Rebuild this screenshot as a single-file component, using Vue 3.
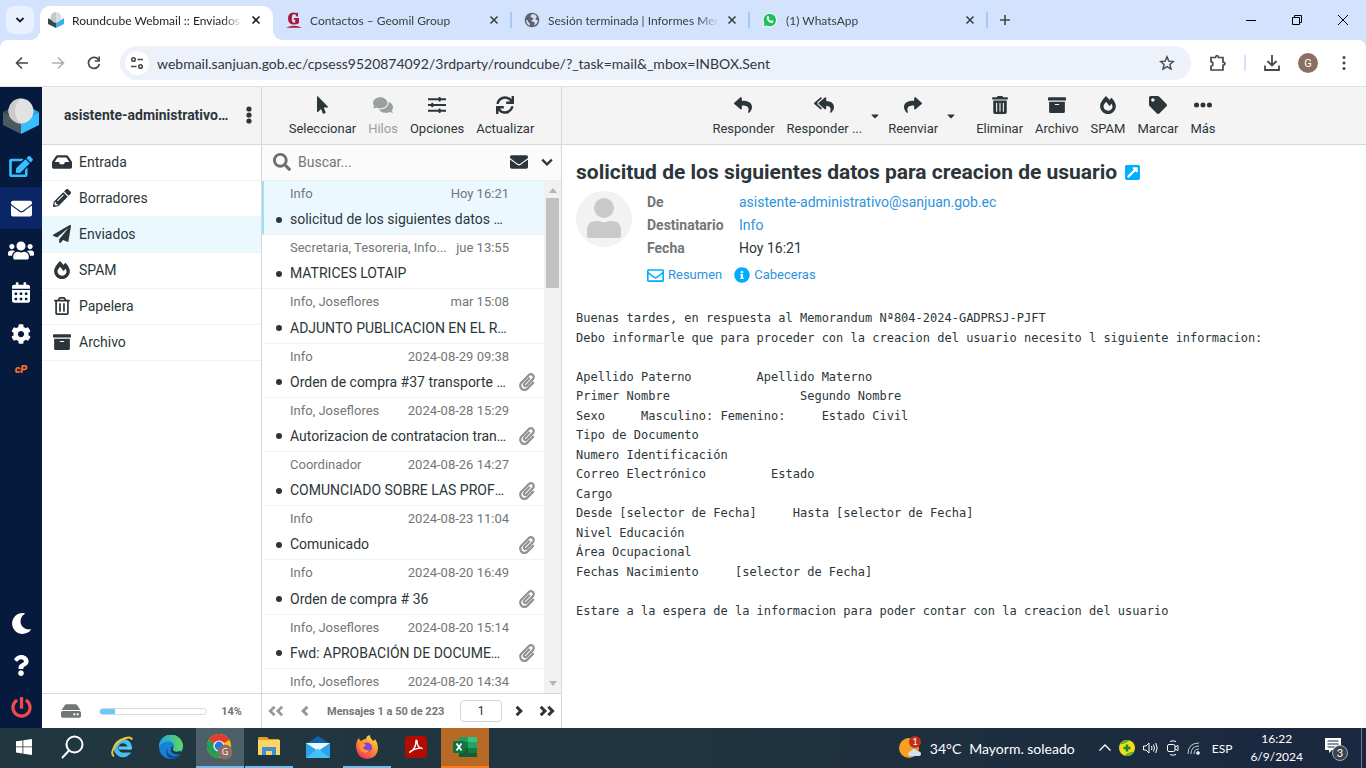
<script setup>
import { h, ref } from 'vue'

const paths = {
  envelope: [512, 'M502.3 190.8c3.9-3.1 9.7-.2 9.7 4.7V400c0 26.5-21.5 48-48 48H48c-26.5 0-48-21.5-48-48V195.6c0-5 5.7-7.8 9.7-4.7 22.4 17.4 52.1 39.5 154.1 113.6 21.1 15.4 56.7 47.8 92.2 47.6 35.7.3 72-32.8 92.3-47.6 102-74.1 131.6-96.3 154-113.7zM256 320c23.2.4 56.6-29.2 73.4-41.4 132.7-96.3 142.8-104.7 173.4-128.7 5.8-4.5 9.2-11.5 9.2-18.9v-19c0-26.5-21.5-48-48-48H48c-26.5 0-48 21.5-48 48v19c0 7.4 3.4 14.3 9.2 18.9 30.6 23.9 40.7 32.4 173.4 128.7 16.8 12.2 50.2 41.8 73.4 41.4z'],
  envelopeOpen: [512, 'M464 64H48C21.5 64 0 85.5 0 112v288c0 26.5 21.5 48 48 48h416c26.5 0 48-21.5 48-48V112c0-26.5-21.5-48-48-48zm0 48v40.8c-22.4 18.3-58.2 46.7-134.6 106.5-16.8 13.2-50.2 45.1-73.4 44.7-23.2.4-56.6-31.5-73.4-44.7C106.2 199.5 70.4 171.1 48 152.8V112h416zM48 400V214.4c22.9 18.2 55.4 43.9 105 82.8 21.9 17.2 60.3 55.2 103 54.8 42.5.3 80.4-37.1 103-54.8 49.6-38.8 82.1-64.5 105-82.800V400H48z'],
  users: [640, 'M96 224c35.3 0 64-28.7 64-64s-28.7-64-64-64-64 28.7-64 64 28.7 64 64 64zm448 0c35.3 0 64-28.7 64-64s-28.7-64-64-64-64 28.7-64 64 28.7 64 64 64zm32 32h-64c-17.6 0-33.5 7.1-45.1 18.6 40.3 22.1 68.9 62 75.1 109.4h66c17.7 0 32-14.3 32-32v-32c0-35.3-28.7-64-64-64zm-256 0c61.9 0 112-50.1 112-112S381.9 32 320 32 208 82.1 208 144s50.1 112 112 112zm76.8 32h-8.3c-20.8 10-43.9 16-68.5 16s-47.6-6-68.5-16h-8.3C179.6 288 128 339.6 128 403.2V432c0 26.5 21.5 48 48 48h288c26.5 0 48-21.5 48-48v-28.8c0-63.6-51.6-115.2-115.2-115.2zm-223.7-13.4C161.5 263.1 145.6 256 128 256H64c-35.3 0-64 28.7-64 64v32c0 17.7 14.3 32 32 32h65.9c6.3-47.4 34.9-87.3 75.2-109.4z'],
  calendar: [448, 'M0 464c0 26.5 21.5 48 48 48h352c26.5 0 48-21.5 48-48V192H0v272zm320-196c0-6.6 5.4-12 12-12h40c6.6 0 12 5.4 12 12v40c0 6.6-5.4 12-12 12h-40c-6.6 0-12-5.4-12-12v-40zm0 128c0-6.6 5.4-12 12-12h40c6.6 0 12 5.4 12 12v40c0 6.6-5.4 12-12 12h-40c-6.6 0-12-5.4-12-12v-40zM192 268c0-6.6 5.4-12 12-12h40c6.6 0 12 5.4 12 12v40c0 6.6-5.4 12-12 12h-40c-6.6 0-12-5.4-12-12v-40zm0 128c0-6.6 5.4-12 12-12h40c6.6 0 12 5.4 12 12v40c0 6.6-5.4 12-12 12h-40c-6.6 0-12-5.4-12-12v-40zM64 268c0-6.6 5.4-12 12-12h40c6.6 0 12 5.4 12 12v40c0 6.6-5.4 12-12 12H76c-6.6 0-12-5.4-12-12v-40zm0 128c0-6.6 5.4-12 12-12h40c6.6 0 12 5.4 12 12v40c0 6.6-5.4 12-12 12H76c-6.6 0-12-5.4-12-12v-40zM400 64h-48V16c0-8.8-7.2-16-16-16h-32c-8.8 0-16 7.2-16 16v48H160V16c0-8.8-7.2-16-16-16h-32c-8.8 0-16 7.2-16 16v48H48C21.5 64 0 85.5 0 112v48h448v-48c0-26.5-21.5-48-48-48z'],
  cog: [512, 'M487.4 315.7l-42.6-24.6c4.3-23.2 4.3-47 0-70.2l42.6-24.6c4.9-2.8 7.1-8.6 5.5-14-11.1-35.6-30-67.8-54.7-94.6-3.8-4.1-10-5.1-14.8-2.3L380.8 110c-17.9-15.4-38.5-27.3-60.8-35.1V25.8c0-5.6-3.9-10.5-9.4-11.7-36.7-8.2-74.3-7.8-109.2 0-5.5 1.2-9.4 6.1-9.4 11.7V75c-22.2 7.9-42.8 19.8-60.8 35.1L88.7 85.5c-4.9-2.8-11-1.9-14.8 2.3-24.7 26.7-43.6 58.9-54.7 94.6-1.7 5.4.6 11.2 5.5 14L67.3 221c-4.3 23.2-4.3 47 0 70.2l-42.6 24.6c-4.9 2.8-7.1 8.6-5.5 14 11.1 35.6 30 67.8 54.7 94.6 3.8 4.1 10 5.1 14.8 2.3l42.6-24.6c17.9 15.4 38.5 27.3 60.8 35.1v49.2c0 5.6 3.9 10.5 9.4 11.7 36.7 8.2 74.3 7.8 109.2 0 5.5-1.2 9.4-6.1 9.4-11.7v-49.2c22.2-7.9 42.8-19.8 60.8-35.1l42.6 24.6c4.9 2.8 11 1.9 14.8-2.3 24.7-26.7 43.6-58.9 54.7-94.6 1.5-5.5-.7-11.3-5.6-14.1zM256 336c-44.1 0-80-35.9-80-80s35.9-80 80-80 80 35.9 80 80-35.9 80-80 80z'],
  moon: [512, 'M283.211 512c78.962 0 151.079-35.925 198.857-94.792 7.068-8.708-.639-21.43-11.562-19.35-124.203 23.654-238.262-71.576-238.262-196.954 0-72.222 38.662-138.635 101.498-174.394 9.686-5.512 7.25-20.197-3.756-22.23A258.156 258.156 0 0 0 283.211 0c-141.309 0-256 114.511-256 256 0 141.309 114.511 256 256 256z'],
  question: [384, 'M202.021 0C122.202 0 70.503 32.703 29.914 91.026c-7.363 10.58-5.093 25.086 5.178 32.874l43.138 32.709c10.373 7.865 25.132 6.026 33.253-4.148 25.049-31.381 43.63-49.449 82.757-49.449 30.764 0 68.816 19.799 68.816 49.631 0 22.552-18.617 34.134-48.993 51.164-35.423 19.86-82.299 44.576-82.299 106.405V320c0 13.255 10.745 24 24 24h72.471c13.255 0 24-10.745 24-24v-5.773c0-42.86 125.268-44.645 125.268-160.627C377.504 66.256 286.902 0 202.021 0zM192 373.459c-38.196 0-69.271 31.075-69.271 69.271 0 38.195 31.075 69.27 69.271 69.27s69.271-31.075 69.271-69.271-31.075-69.27-69.271-69.27z'],
  power: [512, 'M400 54.1c63 45 104 118.6 104 201.9 0 136.8-110.8 247.7-247.5 248C120 504.3 8.2 393 8 256.4 7.9 173.1 48.9 99.3 111.8 54.2c11.7-8.3 28-4.8 35 7.7L162.6 90c5.9 10.5 3.1 23.8-6.6 31-41.5 30.8-68 79.6-68 134.9-.1 92.3 74.5 168.1 168 168.1 91.6 0 168.6-74.2 168-169.1-.3-51.8-24.7-101.8-68.1-134-9.7-7.2-12.4-20.5-6.5-30.9l15.8-28.1c7-12.4 23.2-16.1 34.8-7.8zM296 264V24c0-13.3-10.7-24-24-24h-32c-13.3 0-24 10.7-24 24v240c0 13.3 10.7 24 24 24h32c13.3 0 24-10.7 24-24z'],
  plane: [512, 'M476 3.2L12.5 270.6c-18.1 10.4-15.8 35.6 2.2 43.2L121 358.4l287.3-253.2c5.5-4.9 13.3 2.6 8.6 8.3L176 407v80.5c0 23.6 28.5 32.9 42.5 15.8L282 426l124.6 52.2c14.2 6 30.4-2.9 33-18.2l72-432C515 7.8 493.3-6.8 476 3.2z'],
  inbox: [576, 'M567.938 243.908L462.25 85.374A48.003 48.003 0 0 0 422.311 64H153.689a48 48 0 0 0-39.938 21.374L8.062 243.908A47.994 47.994 0 0 0 0 270.533V400c0 26.51 21.49 48 48 48h480c26.51 0 48-21.49 48-48V270.533a47.994 47.994 0 0 0-8.062-26.625zM162.252 128h251.497l85.333 128H376l-32 64H232l-32-64H76.918l85.334-128z'],
  pencil: [512, 'M497.9 142.1l-46.1 46.1c-4.7 4.7-12.3 4.7-17 0l-111-111c-4.7-4.7-4.7-12.3 0-17l46.1-46.1c18.7-18.7 49.1-18.7 67.9 0l60.1 60.1c18.8 18.7 18.8 49.1 0 67.9zM284.2 99.8L21.6 362.4.4 483.9c-2.9 16.4 11.4 30.6 27.8 27.8l121.5-21.3 262.6-262.6c4.7-4.7 4.7-12.3 0-17l-111-111c-4.8-4.7-12.4-4.7-17.1 0zM124.1 339.9c-5.5-5.5-5.5-14.3 0-19.8l154-154c5.5-5.5 14.3-5.5 19.8 0s5.5 14.3 0 19.8l-154 154c-5.5 5.5-14.3 5.5-19.8 0zM88 424h48v36.3l-64.5 11.3-31.1-31.1L51.7 376H88v48z'],
  archive: [512, 'M32 448c0 17.7 14.3 32 32 32h384c17.7 0 32-14.3 32-32V160H32v288zm160-212c0-6.6 5.4-12 12-12h104c6.6 0 12 5.4 12 12v8c0 6.6-5.4 12-12 12H204c-6.6 0-12-5.4-12-12v-8zM480 32H32C14.3 32 0 46.3 0 64v48c0 8.8 7.2 16 16 16h480c8.8 0 16-7.2 16-16V64c0-17.7-14.3-32-32-32z'],
  trash: [448, 'M32 464a48 48 0 0 0 48 48h288a48 48 0 0 0 48-48V128H32zm272-256a16 16 0 0 1 32 0v224a16 16 0 0 1-32 0zm-96 0a16 16 0 0 1 32 0v224a16 16 0 0 1-32 0zm-96 0a16 16 0 0 1 32 0v224a16 16 0 0 1-32 0zM432 32H312l-9.4-18.7A24 24 0 0 0 281.1 0H166.8a23.72 23.72 0 0 0-21.4 13.3L136 32H16A16 16 0 0 0 0 48v32a16 16 0 0 0 16 16h416a16 16 0 0 0 16-16V48a16 16 0 0 0-16-16z'],
  trashLine: [448, 'M268 416h24a12 12 0 0 0 12-12V188a12 12 0 0 0-12-12h-24a12 12 0 0 0-12 12v216a12 12 0 0 0 12 12zM432 80h-82.41l-34-56.7A48 48 0 0 0 274.41 0H173.59a48 48 0 0 0-41.16 23.3L98.41 80H16A16 16 0 0 0 0 96v16a16 16 0 0 0 16 16h16v336a48 48 0 0 0 48 48h288a48 48 0 0 0 48-48V128h16a16 16 0 0 0 16-16V96a16 16 0 0 0-16-16zM171.84 50.91A6 6 0 0 1 177 48h94a6 6 0 0 1 5.15 2.91L293.61 80H154.39zM368 464H80V128h288zm-212-48h24a12 12 0 0 0 12-12V188a12 12 0 0 0-12-12h-24a12 12 0 0 0-12 12v216a12 12 0 0 0 12 12z'],
  fire: [448, 'M323.56 51.2c-20.8 19.3-39.58 39.59-56.22 59.97C240.08 73.62 206.28 35.53 168 0 69.74 91.17 0 209.96 0 281.6 0 408.85 100.29 512 224 512s224-103.15 224-230.4c0-53.27-51.98-163.14-124.44-230.4zm-19.47 340.65C282.43 407.01 255.72 416 226.86 416 154.71 416 96 368.26 96 290.75c0-38.61 24.31-72.63 72.79-130.75 6.93 7.98 98.83 125.34 98.83 125.34l58.63-66.88c4.14 6.85 7.91 13.55 11.27 19.97 27.35 52.19 15.81 118.97-33.43 153.42z'],
  reply: [512, 'M8.309 189.836L184.313 37.851C199.719 24.546 224 35.347 224 56.015v80.053c160.629 1.839 288 34.032 288 186.258 0 61.441-39.581 122.309-83.333 154.132-13.653 9.931-33.111-2.533-28.077-18.631 45.344-145.012-21.507-183.51-176.59-185.742V360c0 20.7-24.3 31.453-39.687 18.164l-176.004-152c-11.071-9.562-11.086-26.753 0-36.328z'],
  replyAll: [576, 'M136.309 189.836L312.313 37.851C327.72 24.546 352 35.348 352 56.015v82.763c129.182 10.231 224 52.212 224 183.548 0 61.441-39.582 122.309-83.333 154.132-13.653 9.931-33.111-2.533-28.077-18.631 38.512-123.162-3.922-169.482-112.59-182.015v84.175c0 20.701-24.3 31.453-39.687 18.164L136.309 226.164c-11.071-9.561-11.086-26.753 0-36.328zm-128 36.328L184.313 378.15C199.7 391.439 224 380.687 224 359.986v-15.818l-108.606-93.786A55.96 55.96 0 0 1 96 207.998a55.953 55.953 0 0 1 19.393-42.38L224 71.832V56.015c0-20.667-24.28-31.469-39.687-18.164L8.309 189.836c-11.086 9.575-11.071 26.767 0 36.328z'],
  share: [512, 'M503.691 189.836L327.687 37.851C312.281 24.546 288 35.347 288 56.015v80.053C127.371 137.907 0 170.1 0 322.326c0 61.441 39.581 122.309 83.333 154.132 13.653 9.931 33.111-2.533 28.077-18.631C66.066 312.814 132.917 274.316 288 272.085V360c0 20.7 24.3 31.453 39.687 18.164l176.004-152c11.071-9.562 11.086-26.753 0-36.328z'],
  tag: [512, 'M0 252.118V48C0 21.49 21.49 0 48 0h204.118a48 48 0 0 1 33.941 14.059l211.882 211.882c18.745 18.745 18.745 49.137 0 67.882L293.823 497.941c-18.745 18.745-49.137 18.745-67.882 0L14.059 286.059A48 48 0 0 1 0 252.118zM112 64c-26.51 0-48 21.49-48 48s21.49 48 48 48 48-21.49 48-48-21.49-48-48-48z'],
  ellipsis: [512, 'M328 256a72 72 0 1 1-144 0a72 72 0 0 1 144 0zM512 256a72 72 0 1 1-144 0a72 72 0 0 1 144 0zM144 256a72 72 0 1 1-144 0a72 72 0 0 1 144 0z'],
  sliders: [512, 'M0 66h300V40q0-12 12-12h36q12 0 12 12v26h152v54H360v26q0 12-12 12h-36q-12 0-12-12v-26H0zM0 229h92v-26q0-12 12-12h36q12 0 12 12v26h360v54H152v26q0 12-12 12h-36q-12 0-12-12v-26H0zM0 392h300v-26q0-12 12-12h36q12 0 12 12v26h152v54H360v26q0 12-12 12h-36q-12 0-12-12v-26H0z'],
  sync: [512, 'M440.65 12.57l4 82.77A247.16 247.16 0 0 0 255.83 8C134.73 8 33.91 94.92 12.29 209.82A12 12 0 0 0 24.09 224h49.05a12 12 0 0 0 11.67-9.26 175.91 175.91 0 0 1 317-56.94l-101.46-4.86a12 12 0 0 0-12.57 12v47.41a12 12 0 0 0 12 12H500a12 12 0 0 0 12-12V12a12 12 0 0 0-12-12h-47.37a12 12 0 0 0-11.98 12.57zM255.83 432a175.61 175.61 0 0 1-146-77.8l101.8 4.87a12 12 0 0 0 12.57-12v-47.4a12 12 0 0 0-12-12H12a12 12 0 0 0-12 12V500a12 12 0 0 0 12 12h47.35a12 12 0 0 0 12-12.6l-4.15-82.57A247.17 247.17 0 0 0 255.83 504c121.11 0 221.93-86.92 243.55-201.82a12 12 0 0 0-11.8-14.18h-49.05a12 12 0 0 0-11.67 9.26A175.86 175.86 0 0 1 255.83 432z'],
  comments: [576, 'M416 192c0-88.4-93.1-160-208-160S0 103.6 0 192c0 34.3 14.1 65.9 38 92-13.4 30.2-35.5 54.2-35.8 54.5-2.2 2.3-2.8 5.7-1.5 8.7S4.8 352 8 352c36.6 0 66.9-12.3 88.7-25 32.2 15.7 70.3 25 111.3 25 114.9 0 208-71.6 208-160zm122 220c23.9-26 38-57.7 38-92 0-66.9-53.5-124.2-129.3-148.1.9 6.6 1.3 13.3 1.3 20.1 0 105.9-107.7 192-240 192-10.8 0-21.3-.8-31.7-1.9C207.8 439.6 281.8 480 368 480c41 0 79.1-9.2 111.3-25 21.8 12.7 52.1 25 88.7 25 3.2 0 6.1-1.9 7.3-4.8 1.3-2.9.7-6.3-1.5-8.7-.3-.3-22.4-24.2-35.8-54.5z'],
  pointer: [320, 'M302.189 329.126H196.105l55.831 135.993c3.889 9.428-.555 19.999-9.444 23.999l-49.165 21.427c-9.165 4-19.443-.571-23.332-9.714l-53.053-129.136-86.664 89.138C18.729 472.71 0 463.554 0 447.977V18.299C0 1.899 19.921-6.096 30.277 5.443l284.412 292.542c11.472 11.179 3.007 31.141-12.5 31.141z'],
  search: [512, 'M505 442.7L405.3 343c-4.5-4.5-10.6-7-17-7H372c27.6-35.3 44-79.7 44-128C416 93.1 322.9 0 208 0S0 93.1 0 208s93.1 208 208 208c48.3 0 92.7-16.4 128-44v16.3c0 6.4 2.5 12.5 7 17l99.7 99.7c9.4 9.4 24.6 9.4 33.9 0l28.3-28.3c9.4-9.4 9.4-24.6.1-34zM208 336c-70.7 0-128-57.2-128-128 0-70.7 57.2-128 128-128 70.7 0 128 57.2 128 128 0 70.7-57.2 128-128 128z'],
  clip: [448, 'M43.246 466.142c-58.43-60.289-57.341-157.511 1.386-217.581L254.392 34c44.316-45.332 116.351-45.336 160.671 0 43.89 44.894 43.943 117.329 0 162.276L232.214 383.128c-29.855 30.537-78.633 30.111-107.982-.998-28.275-29.97-27.368-77.473 1.452-106.953l143.743-146.835c6.182-6.314 16.312-6.422 22.626-.241l22.861 22.379c6.315 6.182 6.422 16.312.241 22.626L171.427 319.927c-4.932 5.045-5.236 13.428-.648 18.292 4.372 4.634 11.245 4.711 15.688.165l182.849-186.851c19.613-20.062 19.613-52.725-.011-72.798-19.189-19.627-49.957-19.637-69.154 0L90.39 293.295c-34.763 35.56-35.299 93.12-1.191 128.313 34.01 35.093 88.985 35.137 123.058.286l172.06-175.999c6.177-6.319 16.307-6.433 22.626-.256l22.877 22.364c6.319 6.177 6.434 16.307.256 22.626l-172.06 175.998c-59.576 60.938-155.943 60.216-214.77-.485z'],
  hdd: [576, 'M576 304v96c0 26.51-21.49 48-48 48H48c-26.51 0-48-21.49-48-48v-96c0-26.51 21.49-48 48-48h480c26.51 0 48 21.49 48 48zm-48-80a79.557 79.557 0 0 1 30.777 6.165L462.25 85.374A48.003 48.003 0 0 0 422.311 64H153.689a48 48 0 0 0-39.938 21.374L17.223 230.165A79.557 79.557 0 0 1 48 224h480zm-48 96c-17.673 0-32 14.327-32 32s14.327 32 32 32 32-14.327 32-32-14.327-32-32-32zm-96 0c-17.673 0-32 14.327-32 32s14.327 32 32 32 32-14.327 32-32-14.327-32-32-32z'],
  info: [512, 'M256 8C119.043 8 8 119.083 8 256c0 136.997 111.043 248 248 248s248-111.003 248-248C504 119.083 392.957 8 256 8zm0 110c23.196 0 42 18.804 42 42s-18.804 42-42 42-42-18.804-42-42 18.804-42 42-42zm56 254c0 6.627-5.373 12-12 12h-88c-6.627 0-12-5.373-12-12v-24c0-6.627 5.373-12 12-12h12v-64h-12c-6.627 0-12-5.373-12-12v-24c0-6.627 5.373-12 12-12h64c6.627 0 12 5.373 12 12v100h12c6.627 0 12 5.373 12 12v24z'],
  edit: [576, 'M402.6 83.2l90.2 90.2c3.8 3.8 3.8 10 0 13.8L274.4 405.6l-92.8 10.3c-12.4 1.4-22.9-9.1-21.5-21.5l10.3-92.8L388.8 83.2c3.8-3.8 10-3.8 13.8 0zm162-22.9l-48.8-48.8c-15.2-15.2-39.9-15.2-55.2 0l-35.4 35.4c-3.8 3.8-3.8 10 0 13.8l90.2 90.2c3.8 3.8 10 3.8 13.8 0l35.4-35.4c15.2-15.3 15.2-40 0-55.2zM384 346.2V448H64V128h229.8c3.2 0 6.2-1.3 8.5-3.5l40-40c7.6-7.6 2.2-20.5-8.5-20.5H48C21.5 64 0 85.5 0 112v352c0 26.5 21.5 48 48 48h352c26.5 0 48-21.5 48-48V306.2c0-10.7-12.9-16-20.5-8.5l-40 40c-2.2 2.3-3.5 5.3-3.5 8.5z'],
  openSquare: [448, 'M448 80v352c0 26.5-21.5 48-48 48H48c-26.5 0-48-21.5-48-48V80c0-26.5 21.5-48 48-48h352c26.5 0 48 21.5 48 48zm-88 16H248c-21.3 0-32.1 25.9-17 41l31.9 31.9L67 364.5c-4.7 4.7-4.7 12.3 0 17l31.5 31.5c4.7 4.7 12.3 4.7 17 0l195.6-195.6L343 249.3c15 15 41 4.5 41-17V120c0-13.3-10.7-24-24-24z'],
  caret: [320, 'M31.3 192h257.3c17.8 0 26.7 21.5 14.1 34.1L174.1 354.8c-7.8 7.8-20.5 7.8-28.3 0L17.2 226.1C4.6 213.5 13.5 192 31.3 192z'],
  down: [512, 'M256 384L76 204l54-54 126 126 126-126 54 54z'],
  left: [256, 'M30 256L180 106l60 60-90 90 90 90-60 60z'],
  right: [256, 'M226 256L76 106l-60 60 90 90-90 90 60 60z'],
  doubleLeft: [448, 'M6 256l150-150 54 54-96 96 96 96-54 54zM222 256l150-150 54 54-96 96 96 96-54 54z'],
  doubleRight: [448, 'M442 256L292 106l-60 60 90 90-90 90 60 60zM226 256L76 106l-60 60 90 90-90 90 60 60z'],
}

const Icon = (props) => {
  const [w, d] = paths[props.name]
  return h('svg', {
    viewBox: `0 0 ${w} 512`,
    width: Math.round((props.size * w) / 512),
    height: props.size,
    fill: 'currentColor',
    'aria-hidden': 'true',
  }, [h('path', { d })])
}
Icon.props = ['name', 'size']

const address = ref('webmail.sanjuan.gob.ec/cpsess9520874092/3rdparty/roundcube/?_task=mail&_mbox=INBOX.Sent')
const query = ref('')
const page = ref('1')
const usage = ref(14)

const tabs = [
  { title: 'Roundcube Webmail :: Enviados', icon: 'cube', active: true },
  { title: 'Contactos – Geomil Group', icon: 'geomil' },
  { title: 'Sesión terminada | Informes Mensuales', icon: 'globe' },
  { title: '(1) WhatsApp', icon: 'whatsapp' },
]

const tasks = [
  { icon: 'edit', label: 'Redactar', cls: 'compose' },
  { icon: 'envelope', label: 'Correo', cls: 'selected' },
  { icon: 'users', label: 'Contactos' },
  { icon: 'calendar', label: 'Calendario' },
  { icon: 'cog', label: 'Configuración' },
]
const bottomTasks = [
  { icon: 'moon', label: 'Modo oscuro' },
  { icon: 'question', label: 'Acerca de' },
  { icon: 'power', label: 'Cerrar sesión', cls: 'logout' },
]

const folders = [
  { name: 'Entrada', icon: 'inbox' },
  { name: 'Borradores', icon: 'pencil' },
  { name: 'Enviados', icon: 'plane', selected: true },
  { name: 'SPAM', icon: 'fire' },
  { name: 'Papelera', icon: 'trashLine' },
  { name: 'Archivo', icon: 'archive' },
]

const listActions = [
  { label: 'Seleccionar', icon: 'pointer' },
  { label: 'Hilos', icon: 'comments', disabled: true },
  { label: 'Opciones', icon: 'sliders' },
  { label: 'Actualizar', icon: 'sync' },
]

const messageActions = [
  { label: 'Responder', icon: 'reply' },
  { label: 'Responder ...', icon: 'replyAll', menu: true },
  { label: 'Reenviar', icon: 'share', menu: true, last: true },
  { label: 'Eliminar', icon: 'trash' },
  { label: 'Archivo', icon: 'archive' },
  { label: 'SPAM', icon: 'fire' },
  { label: 'Marcar', icon: 'tag' },
  { label: 'Más', icon: 'ellipsis' },
]

const messages = [
  { to: 'Info', date: 'Hoy 16:21', subject: 'solicitud de los siguientes datos para creacion de usuario', selected: true },
  { to: 'Secretaria, Tesoreria, Info...', date: 'jue 13:55', subject: 'MATRICES LOTAIP' },
  { to: 'Info, Joseflores', date: 'mar 15:08', subject: 'ADJUNTO PUBLICACION EN EL REGISTRO' },
  { to: 'Info', date: '2024-08-29 09:38', subject: 'Orden de compra #37 transporte escolar', clip: true },
  { to: 'Info, Joseflores', date: '2024-08-28 15:29', subject: 'Autorizacion de contratacion transporte', clip: true },
  { to: 'Coordinador', date: '2024-08-26 14:27', subject: 'COMUNCIADO SOBRE LAS PROFORMAS', clip: true },
  { to: 'Info', date: '2024-08-23 11:04', subject: 'Comunicado', clip: true },
  { to: 'Info', date: '2024-08-20 16:49', subject: 'Orden de compra # 36', clip: true },
  { to: 'Info, Joseflores', date: '2024-08-20 15:14', subject: 'Fwd: APROBACIÓN DE DOCUMENTOS', clip: true },
  { to: 'Info, Joseflores', date: '2024-08-20 14:34' },
]

const gap = (n) => ' '.repeat(n)
const bodyText = [
  'Buenas tardes, en respuesta al Memorandum Nª804-2024-GADPRSJ-PJFT',
  'Debo informarle que para proceder con la creacion del usuario necesito l siguiente informacion:',
  '',
  'Apellido Paterno' + gap(9) + 'Apellido Materno',
  'Primer Nombre' + gap(18) + 'Segundo Nombre',
  'Sexo' + gap(5) + 'Masculino: Femenino:' + gap(5) + 'Estado Civil',
  'Tipo de Documento',
  'Numero Identificación',
  'Correo Electrónico' + gap(9) + 'Estado',
  'Cargo',
  'Desde [selector de Fecha]' + gap(5) + 'Hasta [selector de Fecha]',
  'Nivel Educación',
  'Área Ocupacional',
  'Fechas Nacimiento' + gap(5) + '[selector de Fecha]',
  '',
  'Estare a la espera de la informacion para poder contar con la creacion del usuario',
].join('\n')
</script>

<template>
  <div class="screen">
    <header class="tabstrip">
      <button class="tab-search" aria-label="Buscar pestañas">
        <svg width="10" height="10" viewBox="0 0 10 10"><path d="M1.5 3L5 6.500 8.500 3" fill="none" stroke="#1f1f1f" stroke-width="1.800" /></svg>
      </button>
      <div class="tabs">
        <div v-for="t in tabs" :key="t.title" class="tab" :class="{ active: t.active }">
          <svg v-if="t.icon === 'cube'" width="16" height="16" viewBox="0 0 36 36">
            <path d="M0 14l18 9v13L0 27z" fill="#37474f" /><path d="M36 14l-18 9v13l18-9z" fill="#35b0f0" />
            <circle cx="18" cy="12" r="12" fill="#dcdcdc" /><path d="M18 0a12 12 0 0 0 0 24z" fill="#c4c8ca" />
          </svg>
          <svg v-else-if="t.icon === 'geomil'" width="16" height="16" viewBox="0 0 16 16">
            <path d="M12 .5v4h-1.500Q10 2.200 8 2.200q-2.200 0-2.200 4.300T8 10.800q.8 0 1.200-.4V7.700H7.800V6H13v5q-2 1.600-5 1.600-6 0-6-6.100T7.700.4q1.600 0 2.600.8l.7-.7z" fill="#a8193d" />
            <path d="M0 15.800q8-4 16 0z" fill="#a8193d" />
          </svg>
          <svg v-else-if="t.icon === 'globe'" width="16" height="16" viewBox="0 0 16 16">
            <circle cx="8" cy="8" r="7.300" fill="#5f6368" />
            <path d="M9.500 2q-3 .3-3 2t2 1.700q1.500.4.5 1.800-2 .5-1.500 2 2-.3 3 1T9 13.800Q14 12 13.800 8q-2.500.2-2.300-1.200T13 5Q12 3 9.500 2zM2.200 8Q2 12 6 13.600q.3-2-1-2.800T4 8.500z" fill="#d3e3fd" />
          </svg>
          <svg v-else width="16" height="16" viewBox="0 0 16 16">
            <path d="M1 15l1-3.500A6.700 6.700 0 1 1 4.600 14z" fill="#1fc05b" stroke="#fff" stroke-width="1" />
            <path d="M5.200 4.500q1-1 1.600.3l.4 1-.7 1q.9 1.700 2.500 2.300l.9-.9 1.700.9q-.2 2-2.200 1.900Q5.700 10.300 4.800 6.500q-.1-1.300.4-2z" fill="#fff" />
          </svg>
          <span class="tab-title">{{ t.title }}</span>
          <button class="tab-close" aria-label="Cerrar pestaña">
            <svg width="10" height="10" viewBox="0 0 10 10"><path d="M1.500 1.500l7 7M8.500 1.500l-7 7" stroke="currentColor" stroke-width="1.600" /></svg>
          </button>
        </div>
      </div>
      <button class="new-tab" aria-label="Pestaña nueva">
        <svg width="12" height="12" viewBox="0 0 12 12"><path d="M6 1v10M1 6h10" stroke="#474747" stroke-width="1.600" /></svg>
      </button>
      <div class="window-buttons">
        <button aria-label="Minimizar"><svg width="10" height="10" viewBox="0 0 10 10"><path d="M0 5.500h10" stroke="#000" /></svg></button>
        <button aria-label="Restaurar"><svg width="10" height="10" viewBox="0 0 10 10"><path d="M.5 2.500h7v7h-7zM2.500 2.500v-2h7v7h-2" fill="none" stroke="#000" /></svg></button>
        <button aria-label="Cerrar"><svg width="10" height="10" viewBox="0 0 10 10"><path d="M0 0l10 10M10 0L0 10" stroke="#000" /></svg></button>
      </div>
    </header>

    <div class="toolbar-wrap">
      <div class="browser-bar">
        <button class="nav-btn" aria-label="Atrás"><svg width="14" height="14" viewBox="0 0 14 14"><path d="M13 7H2M7 1.500L1.500 7 7 12.500" fill="none" stroke="#474747" stroke-width="1.600" /></svg></button>
        <button class="nav-btn" aria-label="Adelante" disabled><svg width="14" height="14" viewBox="0 0 14 14"><path d="M1 7h11M7 1.500L12.500 7 7 12.500" fill="none" stroke="#b0b0b0" stroke-width="1.600" /></svg></button>
        <button class="nav-btn" aria-label="Recargar"><svg width="14" height="14" viewBox="0 0 14 14"><path d="M11.800 4.200A5.500 5.500 0 1 0 12.400 8" fill="none" stroke="#474747" stroke-width="1.700" /><path d="M13 .5v5.300H7.700V4.200h3.700V.5z" fill="#474747" /></svg></button>
        <div class="omnibox">
          <button class="site-info" aria-label="Información del sitio">
            <svg width="14" height="14" viewBox="0 0 14 14" fill="none" stroke="#474747" stroke-width="1.500"><circle cx="3.500" cy="3.500" r="1.800" /><path d="M7.500 3.500H13M1 10.500h5.500" /><circle cx="10.500" cy="10.500" r="1.800" /></svg>
          </button>
          <input v-model="address" class="url" type="text" aria-label="Dirección" />
          <button class="star" aria-label="Añadir a marcadores"><svg width="16" height="16" viewBox="0 0 16 16"><path d="M8 1.800l1.800 4.300 4.600.4-3.500 3 1.100 4.500L8 11.600 4 14l1.100-4.500-3.500-3 4.600-.4z" fill="none" stroke="#474747" stroke-width="1.400" /></svg></button>
        </div>
        <button class="bar-icon" aria-label="Extensiones"><svg width="18" height="18" viewBox="0 0 18 18"><path d="M2 3.500h4.500q.2-1.800 1.500-1.800t1.500 1.800H14v4.700q2 .2 2 1.500t-2 1.500V16H2v-3.800q2-.5 2-2.300T2 7.600z" fill="none" stroke="#474747" stroke-width="1.700" /></svg></button>
        <i class="bar-sep"></i>
        <button class="bar-icon" aria-label="Descargas"><svg width="16" height="16" viewBox="0 0 16 16"><path d="M8 0v10M3.500 6L8 10.500 12.500 6M1 10.500V15h14v-4.500" fill="none" stroke="#474747" stroke-width="1.800" /></svg></button>
        <button class="profile" aria-label="Perfil">G</button>
        <button class="bar-icon menu" aria-label="Menú"><svg width="4" height="16" viewBox="0 0 4 16" fill="#474747"><circle cx="2" cy="2.500" r="1.500" /><circle cx="2" cy="8" r="1.500" /><circle cx="2" cy="13.500" r="1.500" /></svg></button>
      </div>
    </div>

    <main class="mail">
      <nav class="taskmenu" aria-label="Tareas">
        <div class="logo">
          <svg width="36" height="36" viewBox="0 0 36 36">
            <path d="M0 14l18 9v13L0 27z" fill="#4b5a61" /><path d="M36 14l-18 9v13l18-9z" fill="#37beff" />
            <path d="M0 14l6-3 12 12z" fill="#3a4a52" /><path d="M36 14l-6-3-12 12z" fill="#2aa9ec" />
            <circle cx="18" cy="13" r="12.500" fill="#e2e2e2" /><path d="M18 .5a12.500 12.500 0 0 0 0 25q-6-5-6-12.500T18 .5z" fill="#cbcbcb" />
          </svg>
        </div>
        <a v-for="t in tasks" :key="t.icon" href="#" :class="t.cls" :aria-label="t.label"><Icon :name="t.icon" :size="t.icon === 'cog' ? 20 : 21" /></a>
        <a href="#" class="cpanel">cP</a>
        <div class="grow"></div>
        <a v-for="t in bottomTasks" :key="t.icon" href="#" :class="t.cls" :aria-label="t.label"><Icon :name="t.icon" :size="21" /></a>
      </nav>

      <section class="folders">
        <header class="pane-head account">
          <span>asistente-administrativo@sanjuan.gob.ec</span>
          <button aria-label="Opciones de carpeta"><svg width="6" height="18" viewBox="0 0 6 18" fill="#2c363a"><circle cx="3" cy="3" r="2.600" /><circle cx="3" cy="9" r="2.600" /><circle cx="3" cy="15" r="2.600" /></svg></button>
        </header>
        <ul>
          <li v-for="f in folders" :key="f.name" :class="{ selected: f.selected }">
            <a href="#"><span class="ficon"><Icon :name="f.icon" :size="18" /></span>{{ f.name }}</a>
          </li>
        </ul>
        <footer class="quota">
          <Icon name="hdd" :size="18" />
          <div class="bar"><div class="fill" :style="{ width: usage + '%' }"></div></div>
          <span>{{ usage }}%</span>
        </footer>
      </section>

      <section class="listing">
        <header class="pane-head actions">
          <button v-for="a in listActions" :key="a.label" class="action" :disabled="a.disabled"><Icon :name="a.icon" :size="18" />{{ a.label }}</button>
        </header>
        <div class="searchbar">
          <Icon name="search" :size="18" class="mag" />
          <input v-model="query" type="text" placeholder="Buscar..." aria-label="Buscar" />
          <button aria-label="No leídos"><Icon name="envelope" :size="18" /></button>
          <button aria-label="Opciones de búsqueda"><Icon name="down" :size="16" /></button>
        </div>
        <div class="scroller">
          <ul class="messages">
            <li v-for="m in messages" :key="m.date" :class="{ selected: m.selected }">
              <div class="meta"><span class="to">{{ m.to }}</span><span class="date">{{ m.date }}</span></div>
              <div v-if="m.subject" class="subject"><i class="dot"></i><a href="#">{{ m.subject }}</a><span class="clip"><Icon v-if="m.clip" name="clip" :size="18" /></span></div>
            </li>
          </ul>
          <div class="scrollbar">
            <svg width="8" height="5" viewBox="0 0 8 5"><path d="M0 5l4-5 4 5z" fill="#b4b4b4" /></svg>
            <div class="thumb"></div>
            <svg width="8" height="5" viewBox="0 0 8 5"><path d="M0 0l4 5 4-5z" fill="#b4b4b4" /></svg>
          </div>
        </div>
        <footer class="pager">
          <button disabled aria-label="Primera página"><Icon name="doubleLeft" :size="18" /></button>
          <button disabled aria-label="Página anterior"><Icon name="left" :size="18" /></button>
          <span>Mensajes 1 a 50 de 223</span>
          <input v-model="page" type="text" aria-label="Página" />
          <button aria-label="Página siguiente"><Icon name="right" :size="18" /></button>
          <button aria-label="Última página"><Icon name="doubleRight" :size="18" /></button>
        </footer>
      </section>

      <article class="reader">
        <header class="pane-head actions">
          <template v-for="a in messageActions" :key="a.label">
            <button class="action"><Icon :name="a.icon" :size="18" />{{ a.label }}</button>
            <button v-if="a.menu" class="drop" :class="{ last: a.last }" :aria-label="'Más opciones de ' + a.label"><Icon name="caret" :size="12" /></button>
          </template>
        </header>
        <div class="message">
          <h1>solicitud de los siguientes datos para creacion de usuario
            <a href="#" aria-label="Abrir en ventana nueva"><Icon name="openSquare" :size="17" /></a>
          </h1>
          <div class="envelope">
            <svg class="avatar" width="56" height="56" viewBox="0 0 56 56">
              <circle cx="28" cy="28" r="28" fill="#f2f2f2" /><circle cx="28" cy="17" r="10" fill="#c9c9c9" />
              <path d="M11 45v-6q0-9 9-9h3q5 2.500 10 0h3q9 0 9 9v6q0 2-2 2H13q-2 0-2-2z" fill="#c9c9c9" />
            </svg>
            <div>
              <dl>
                <dt>De</dt><dd><a href="#">asistente-administrativo@sanjuan.gob.ec</a></dd>
                <dt>Destinatario</dt><dd><a href="#">Info</a></dd>
                <dt>Fecha</dt><dd>Hoy 16:21</dd>
              </dl>
              <div class="links">
                <a href="#"><Icon name="envelopeOpen" :size="17" />Resumen</a>
                <a href="#"><Icon name="info" :size="16" />Cabeceras</a>
              </div>
            </div>
          </div>
          <div class="bodybox"><pre>{{ bodyText }}</pre></div>
        </div>
      </article>
    </main>

    <footer class="taskbar">
      <div class="apps">
        <button aria-label="Inicio"><svg width="16" height="16" viewBox="0 0 16 16" fill="#fff"><path d="M0 2.300l6.500-.9v6.100H0zM7.300 1.300L16 0v7.500H7.300zM0 8.300h6.500v6.200L0 13.600zM7.300 8.300H16V16l-8.700-1.200z" /></svg></button>
        <button aria-label="Buscar"><svg width="24" height="24" viewBox="0 0 24 24" fill="none" stroke="#fff" stroke-width="2"><circle cx="13.500" cy="9.500" r="8" /><path d="M8 15.500L1 23" /></svg></button>
        <button aria-label="Internet Explorer">
          <svg width="24" height="24" viewBox="0 0 24 24"><circle cx="13" cy="13" r="7" fill="none" stroke="#49bdf0" stroke-width="4.500" /><path d="M14 14.500h10v3H14z" fill="#20363f" /><path d="M9 11.500h11.500v3H9z" fill="#5cc9f5" /><path d="M4 21.500q-3-2-1-7Q6 6 15 3.200q6-1.800 7 1.500" fill="none" stroke="#f3c531" stroke-width="2" /></svg>
        </button>
        <button aria-label="Microsoft Edge">
          <svg width="24" height="24" viewBox="0 0 24 24"><defs><linearGradient id="ed1" x1="0" x2="1"><stop offset="0" stop-color="#1fa3e6" /><stop offset="1" stop-color="#62d957" /></linearGradient></defs>
            <circle cx="12" cy="12" r="12" fill="#1681d6" /><path d="M0 12A12 12 0 0 1 24 11c0 4-3 6-7 6q-3 0-3-2t1-3.500Q15 7 10 6.500 3 6.500 0 12z" fill="url(#ed1)" /><path d="M8 13q0 8 8 8 4 0 6.500-3A12 12 0 0 1 12 24Q5 21 8 13z" fill="#0c4f9e" /><path d="M14.500 11.500q-1.500 2-.3 4 2 2 6.800.5l3 2q-3 2-7 1.500-6-1-5-6 .5-2.500 2.500-2z" fill="#20363f" /></svg>
        </button>
        <button class="running current" aria-label="Google Chrome">
          <svg width="26" height="26" viewBox="0 0 26 26"><circle cx="12" cy="12" r="12" fill="#fbc116" /><path d="M12 12L1.600 6A12 12 0 0 1 22.400 6z" fill="#e33b2e" /><path d="M12 12L1.600 6A12 12 0 0 0 12 24l4-8z" fill="#239f52" /><circle cx="12" cy="12" r="5.600" fill="#fff" /><circle cx="12" cy="12" r="4.400" fill="#2a72e5" /><circle cx="18" cy="18" r="7.500" fill="#8d6e63" /><text x="18" y="21" text-anchor="middle" font-size="9" fill="#fff">G</text></svg>
        </button>
        <button class="running" aria-label="Explorador de archivos">
          <svg width="24" height="22" viewBox="0 0 24 22"><path d="M1 2q0-1 1-1h8l2 2h10v5H1z" fill="#e0a222" /><rect x="1" y="4" width="22" height="15" fill="#fbd667" /><path d="M5 11h14v8h-4v-4H9v4H5z" fill="#3f8fd2" /></svg>
        </button>
        <button aria-label="Correo">
          <svg width="24" height="24" viewBox="0 0 24 24"><path d="M0 9L12 1l12 8v2H0z" fill="#0f62b0" /><path d="M0 8h24v15H0z" fill="#2ba3e8" /><path d="M0 8h24L12 16z" fill="#eef6fc" /><path d="M0 23L12 13.500 24 23z" fill="#47c0f5" /></svg>
        </button>
        <button class="running" aria-label="Firefox">
          <svg width="24" height="24" viewBox="0 0 24 24"><defs><linearGradient id="ff1" x1=".8" y1="0" x2=".2" y2="1"><stop offset="0" stop-color="#ffe23f" /><stop offset=".5" stop-color="#ff8a2b" /><stop offset="1" stop-color="#ee2b6c" /></linearGradient></defs>
            <path d="M1 12Q1 6 4 3q0 2 2 3 2-2 5-2 0-3 4-4 0 4 4 6l1-2q3 4 3 9 0 10-11 11Q2 23 1 12z" fill="url(#ff1)" /><circle cx="12" cy="12.500" r="5" fill="#8b42d6" /><path d="M5 8q4 0 6 2-1 2-3 2 1 4 7 3-4 5-9 1-3-4-1-8z" fill="#ff9a2e" /></svg>
        </button>
        <button aria-label="Adobe Acrobat">
          <svg width="22" height="22" viewBox="0 0 22 22"><rect width="22" height="22" rx="4" fill="#b30b00" /><path d="M5 16q6-3 6-11 0-1.500 1 0 0 7 5.500 7.500Q14 11 6 15q-2 2-1 1z" fill="none" stroke="#fff" stroke-width="1.400" /></svg>
        </button>
        <button class="alert" aria-label="Excel">
          <svg width="24" height="22" viewBox="0 0 24 22"><path d="M6 1h9v7H6z" fill="#1f9d60" /><path d="M15 1h9v5h-9z" fill="#34c481" /><path d="M6 6h9v6H6z" fill="#127a43" /><path d="M15 6h9v6h-9z" fill="#22a366" /><path d="M6 12h18v9H6z" fill="#185c37" /><path d="M15 12h9v5h-9z" fill="#127a43" /><rect y="5" width="12" height="12" rx="1" fill="#0f7440" /><path d="M3.500 7.500l5 7M8.500 7.500l-5 7" stroke="#fff" stroke-width="1.800" /></svg>
        </button>
      </div>
      <div class="tray">
        <button class="weather">
          <svg width="24" height="24" viewBox="0 0 24 24"><circle cx="11" cy="12" r="10" fill="#f6a021" /><path d="M11 20q-2-4 2-5 3-4 6 0 4 0 4 3 0 2-3 2z" fill="#cfe2f8" /><circle cx="17" cy="6" r="6" fill="#c42b1c" /><text x="17" y="9" text-anchor="middle" font-size="9" fill="#fff">1</text></svg>
          <span>34°C</span><span>Mayorm. soleado</span>
        </button>
        <button aria-label="Iconos ocultos"><svg width="12" height="12" viewBox="0 0 12 12"><path d="M.5 8.500L6 3l5.500 5.500" fill="none" stroke="#fff" stroke-width="1.300" /></svg></button>
        <button aria-label="Antivirus"><svg width="16" height="16" viewBox="0 0 16 16"><circle cx="8" cy="8" r="8" fill="#f2dc1d" /><path d="M1 4a8 8 0 0 1 10-3.500Q4 5 1 4zM15 12A8 8 0 0 1 5 15.500Q12 11 15 12z" fill="#59b62a" /><path d="M8 4.500v7M4.500 8h7" stroke="#178a2c" stroke-width="2.600" /></svg></button>
        <button aria-label="Volumen"><svg width="16" height="14" viewBox="0 0 16 14" fill="none" stroke="#fff"><path d="M.5 5h2.500l3-3v10L3 9H.5z" /><path d="M8.500 5q1 2 0 4M10.500 3.500q2 3.500 0 7M12.700 2q3 5 0 10" /></svg></button>
        <button aria-label="Cámara"><svg width="12" height="16" viewBox="0 0 12 16" fill="none" stroke="#fff"><rect x=".5" y="4.500" width="7.500" height="7" rx="1.500" /><path d="M8 7l3-1.500v5L8 9M3 1.500q3-1.500 6 0M3 14.500q3 1.500 6 0" /></svg></button>
        <button aria-label="Red"><svg width="13" height="13" viewBox="0 0 13 13" fill="none" stroke="#c5ccd3"><path d="M1 12Q1 1 12 1M4 12q0-8 8-8M7 12q0-5 5-5" /><circle cx="11" cy="11" r="1.500" fill="#fff" /></svg></button>
        <button class="lang">ESP</button>
        <button class="clock"><span>16:22</span><span>6/9/2024</span></button>
        <button class="notify" aria-label="Notificaciones">
          <svg width="26" height="26" viewBox="0 0 26 26"><path d="M2 3h16v12H9l-3 3v-3H2z" fill="#fff" /><path d="M4.500 6h11M4.500 9h11M4.500 12h7" stroke="#1a2840" /><circle cx="17" cy="18" r="7.500" fill="#3a424c" stroke="#a5abb2" /><text x="17" y="22" text-anchor="middle" font-size="11" fill="#fff">3</text></svg>
        </button>
        <i class="peek"></i>
      </div>
    </footer>
  </div>
</template>

<style>
html, body { background: #fff; }
</style>

<style scoped>
* { box-sizing: border-box; }
.screen { display: flex; flex-direction: column; height: 100vh; overflow: hidden; font-family: Roboto, "Liberation Sans", sans-serif; font-size: 14px; color: #2c363a; background: #fff; }
button { border: 0; padding: 0; background: none; font: inherit; color: inherit; display: inline-flex; align-items: center; justify-content: center; }
input { font: inherit; color: inherit; border: 0; background: none; padding: 0; min-width: 0; outline: 0; }
a { color: inherit; text-decoration: none; }
ul { list-style: none; margin: 0; padding: 0; }
svg { display: block; flex: none; }

.tabstrip { display: flex; align-items: center; height: 40px; background: #d3e3fd; font-family: Lato, "Open Sans", sans-serif; font-size: 12px; color: #3c4043; }
.tab-search { width: 28px; height: 28px; margin: 0 6px; border-radius: 8px; background: #e9f0fe; }
.tabs { display: flex; align-self: stretch; padding-top: 6px; min-width: 0; }
.tab { position: relative; display: flex; align-items: center; gap: 8px; width: 238px; height: 34px; padding: 0 13px 6px 12px; }
.tab.active { width: 233px; margin-right: 1px; padding-left: 8px; padding-right: 12px; background: #fff; border-radius: 10px 10px 0 0; color: #1f1f1f; }
.tab.active::before, .tab.active::after { content: ""; position: absolute; bottom: 0; width: 10px; height: 10px; }
.tab.active::before { left: -10px; background: radial-gradient(circle at 0 0, transparent 10px, #fff 10px); }
.tab.active::after { right: -10px; background: radial-gradient(circle at 100% 0, transparent 10px, #fff 10px); }
.tab:not(.active)::after { content: ""; position: absolute; right: 0; top: 6px; width: 2px; height: 16px; background: #a8c7fa; }
.tab-title { flex: 1; overflow: hidden; white-space: nowrap; mask-image: linear-gradient(to right, #000 88%, transparent); }
.tab-close { width: 10px; }
.new-tab { width: 34px; height: 28px; }
.window-buttons { display: flex; margin-left: auto; align-self: stretch; }
.window-buttons button { width: 46px; }

.toolbar-wrap { background: #d3e3fd; }
.browser-bar { display: flex; align-items: center; height: 47px; padding: 0 12px 0 4px; background: #fff; border-radius: 8px 8px 0 0; border-bottom: 1px solid #dfe1e5; }
.nav-btn { width: 36px; height: 34px; }
.omnibox { display: flex; align-items: center; flex: 1; height: 34px; margin-left: 8px; padding: 0 16px 0 5px; border-radius: 17px; background: #ecf1fa; }
.site-info { width: 24px; height: 24px; border-radius: 50%; background: #fff; margin-right: 8px; }
.url { flex: 1; font-family: Lato, "Open Sans", sans-serif; font-size: 14px; color: #33363a; }
.bar-icon { width: 26px; height: 30px; }
.omnibox + .bar-icon { margin-left: 14px; }
.bar-sep { width: 2px; height: 16px; margin: 0 13px; background: #d3e3fd; }
.profile { width: 20px; height: 20px; margin: 0 16px 0 13px; border-radius: 50%; background: #8d6e63; color: #fff; font-size: 11px; }
.menu { width: 20px; }

.mail { display: flex; flex: 1; min-height: 0; }
.taskmenu { display: flex; flex-direction: column; width: 42px; background: #061a3d; color: #fff; }
.taskmenu a { display: flex; align-items: center; justify-content: center; height: 42px; flex: none; }
.logo { display: flex; align-items: center; justify-content: center; height: 58px; }
.taskmenu .compose { color: #37beff; }
.taskmenu .selected { background: #0c2767; }
.taskmenu .logout { color: #f3494c; }
.taskmenu .cpanel { height: 28px; color: #ff6c2c; font-size: 11px; font-weight: 900; font-style: italic; }
.grow { flex: 1; }

.pane-head { display: flex; flex: none; height: 58px; background: #f4f4f4; border-bottom: 1px solid #d5d9dc; }
.folders { display: flex; flex-direction: column; width: 220px; border-right: 1px solid #d5d9dc; }
.account { align-items: center; padding: 0 9px 2px 22px; gap: 16px; font-weight: 700; }
.account span { flex: 1; overflow: hidden; text-overflow: ellipsis; white-space: nowrap; }
.account button { width: 6px; }
.folders ul { flex: 1; }
.folders li { height: 36px; border-bottom: 1px solid #f0f2f3; }
.folders li a { display: flex; align-items: center; gap: 7px; height: 100%; padding: 0 0 2px 9px; }
.folders li.selected { background: #ebf8ff; }
.ficon { display: flex; justify-content: center; width: 21px; }
.quota { display: flex; align-items: center; height: 35px; padding: 0 19px; border-top: 1px solid #d5d9dc; color: #737677; font-size: 11px; font-weight: 700; }
.bar { flex: 1; height: 7px; margin: 0 14px 0 18px; border: 1px solid #d5dadd; border-radius: 4px; overflow: hidden; }
.fill { height: 100%; background: #6dc8f9; }

.listing { display: flex; flex-direction: column; width: 300px; border-right: 1px solid #d5d9dc; }
.actions { justify-content: center; }
.action { flex-direction: column; justify-content: flex-start; gap: 6px; padding: 9px 6px 0; font-size: 13px; line-height: 17px; white-space: nowrap; }
.action:disabled { color: #9a9fa1; }
.drop { width: 14px; }
.drop.last { margin-right: 12px; }
.searchbar { display: flex; align-items: center; height: 36px; padding: 0 6px 2px 11px; background: #fbfbfb; border-bottom: 1px solid #eceeef; }
.searchbar input { flex: 1; margin-left: 7px; }
.searchbar input::placeholder { color: #737677; opacity: 1; }
.searchbar button { margin-left: 11px; }
.mag { color: #6b6f71; }
.scroller { display: flex; flex: 1; min-height: 0; }
.messages { flex: 1; min-width: 0; overflow: hidden; }
.messages li { padding: 4px 9px 4px 12px; border-left: 2px solid transparent; border-bottom: 1px solid #f0f2f3; }
.messages li.selected { background: #ebf8ff; border-left-color: #a2def8; }
.messages li:last-child { border-bottom: 0; }
.meta { display: flex; justify-content: space-between; padding: 0 26px 0 14px; margin-bottom: 6px; font-size: 13px; line-height: 1.4; color: #737677; white-space: nowrap; }
.subject { display: flex; align-items: center; line-height: 1.5; }
.dot { width: 6px; height: 6px; margin-right: 8px; border-radius: 50%; background: #2c363a; }
.subject a { flex: 1; min-width: 0; overflow: hidden; text-overflow: ellipsis; white-space: nowrap; }
.clip { width: 16px; margin-left: 12px; color: #8f9496; }
.scrollbar { display: flex; flex-direction: column; align-items: center; width: 17px; padding: 7px 0; background: #f1f1f1; }
.thumb { width: 13px; height: 90px; margin: 5px 0 auto; background: #c1c1c1; }
.pager { display: flex; align-items: center; height: 35px; padding: 0 6px; border-top: 1px solid #d5d9dc; }
.pager button:disabled { color: #92989b; }
.pager button:nth-of-type(2) { margin: 0 18px 0 16px; }
.pager span { font-size: 11px; font-weight: 700; color: #737677; white-space: nowrap; }
.pager input { width: 42px; height: 22px; margin: 0 13px 0 auto; border: 1px solid #ced4da; border-radius: 4px; background: #fff; text-align: center; font-size: 12px; }
.pager button:last-child { margin-left: 15px; }

.reader { display: flex; flex-direction: column; flex: 1; min-width: 0; }
.message { flex: 1; padding: 14px; overflow: hidden; }
h1 { display: flex; align-items: center; gap: 8px; margin: 0 0 6px; font-size: 21px; line-height: 26px; font-weight: 700; white-space: nowrap; }
h1 a, .links svg { color: #00acff; }
.envelope { display: flex; gap: 15px; }
dl { display: grid; grid-template-columns: 92px auto; margin: 0; line-height: 23px; }
dt { font-weight: 700; color: #737677; }
dd { margin: 0; }
dd a, .links a { color: #2f93dd; }
.links { display: flex; gap: 12px; margin-top: 6px; font-size: 13px; line-height: 18px; }
.links a { display: flex; align-items: center; gap: 4px; }
.bodybox { margin-top: 25px; font-size: 13px; line-height: 1.5em; }
pre { margin: 0; font-family: "DejaVu Sans Mono", "Liberation Mono", monospace; font-size: 12px; }

.taskbar { display: flex; justify-content: space-between; height: 40px; flex: none; color: #fff; font-family: "Open Sans", "Noto Sans", sans-serif; background: linear-gradient(to right, #21373f, #20343f 50%, #1a2740); }
.apps { display: flex; gap: 1px; }
.apps button { width: 48px; height: 40px; border-bottom: 2px solid transparent; }
.apps .running { border-bottom-color: #76b9ed; }
.apps .current { background: #4b6068; }
.apps .alert { background: #b76926; border-bottom-color: #ff7b0f; }
.tray { display: flex; align-items: center; gap: 8px; font-family: Lato, "Open Sans", sans-serif; font-size: 12px; }
.weather { gap: 8px; margin-right: 16px; font-size: 14px; }
.lang { margin: 0 10px 0 4px; }
.clock { flex-direction: column; line-height: 18px; }
.notify { margin: 0 4px 0 12px; }
.peek { width: 1px; height: 40px; margin-right: 4px; background: #707b88; }
</style>
